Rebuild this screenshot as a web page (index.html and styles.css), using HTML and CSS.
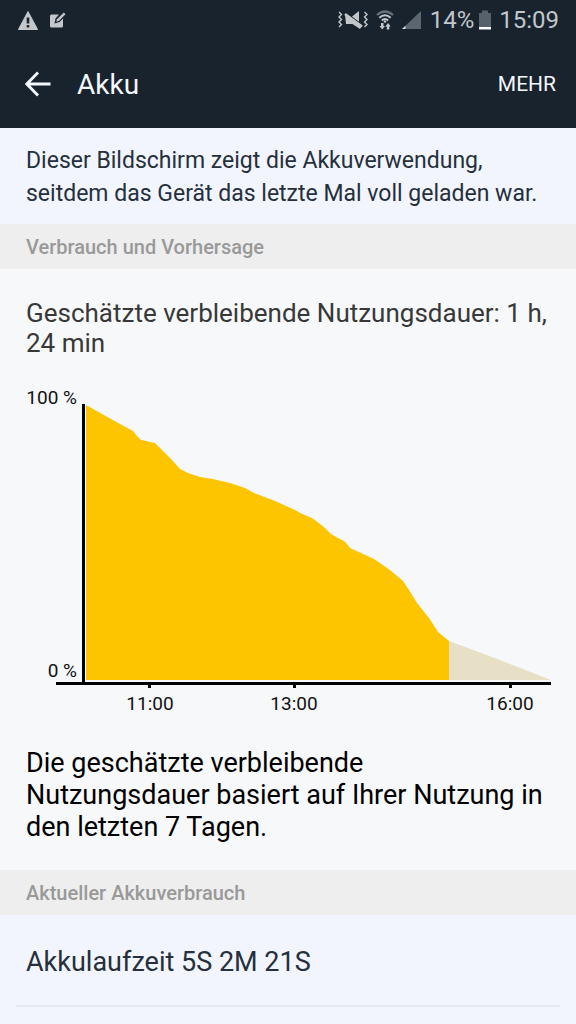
FILE: index.html
```html
<!DOCTYPE html>
<html lang="de">
<head>
  <meta charset="UTF-8">
  <title>Akku</title>
  <meta name="viewport" content="width=device-width, initial-scale=1.0">
  <link rel="stylesheet" href="styles.css">
</head>
<body>

  <div class="statusbar">
    <div class="status-group">
      <svg width="20" height="19" viewBox="0 0 20 19">
        <path d="M10 0.5L19.6 18.5H0.4Z" fill="#c3c6ca" stroke="#c3c6ca" stroke-linejoin="round"/>
        <path d="M8.7 6.5h2.6v6H8.7zM8.7 14h2.6v2.4H8.7z" fill="#18232e"/>
      </svg>
      <svg width="16" height="16" viewBox="0 0 16 16">
        <path d="M1.500 2.500H9L5.500 6.500L4.500 11.500L9.500 10L13 6.500V14q0 1.500-1.500 1.500h-10Q0 15.500 0 14V4q0-1.500 1.500-1.500z" fill="#c3c6ca"/>
        <path d="M13.800 0.500L15.500 2.200L8.800 9L6.300 9.700L7 7.200z" fill="#c3c6ca"/>
      </svg>
    </div>
    <div class="status-group status-right">
      <svg width="30" height="20" viewBox="0 0 30 20">
        <path d="M14 6.500L21 1v13z" fill="#c3c6ca"/>
        <path d="M7 4.500L23.500 16.500L22 19L14.500 14H8z" fill="#c3c6ca"/>
        <path d="M7 2.500L24.500 15" stroke="#18232e" stroke-width="1.500"/>
        <path d="M7 4L24 16.500" stroke="#c3c6ca" stroke-width="2.600"/>
        <path d="M1 2l2.500 2.500L1 7l2.500 2.500L1 12l2.500 2.500L1 17M26.500 2L29 4.500L26.500 7L29 9.500L26.500 12L29 14.500L26.500 17" fill="none" stroke="#c3c6ca" stroke-width="1.400"/>
      </svg>
      <svg width="18" height="20" viewBox="0 0 18 20">
        <path d="M1 5Q9-2 17 5" fill="none" stroke="#66717a" stroke-width="2.200"/>
        <path d="M3.300 7.800Q9 2.800 14.700 7.800M5.800 10.500Q9 7.500 12.200 10.500" fill="none" stroke="#c3c6ca" stroke-width="2"/>
        <circle cx="9" cy="11.500" r="1.300" fill="#c3c6ca"/>
        <path d="M5 13h2.500v3h1.500l-2.800 3.500L3.500 16H5zM10.800 19.500h2.500v-3h1.500L12 13l-2.700 3.500h1.500z" fill="#c3c6ca"/>
      </svg>
      <svg width="20" height="20" viewBox="0 0 20 20">
        <path d="M19 1v18H0z" fill="#5b6670"/>
        <path d="M3.500 15.700V19H0z" fill="#d5d8db"/>
      </svg>
      <div class="battery">
        <span>14%</span>
        <svg width="12" height="20" viewBox="0 0 12 20">
          <path d="M3 0.500h6V3h3v14H0V3h3z" fill="#56616b"/>
          <path d="M0 17h12v2.500H0z" fill="#fff"/>
        </svg>
      </div>
      <span>15:09</span>
    </div>
  </div>

  <header class="navbar">
    <button class="back-btn" aria-label="Zurück">
      <svg width="26" height="26" viewBox="0 0 26 26">
        <path d="M13 1.500L1.800 13L13 24.500M2 13H25.500" fill="none" stroke="#f4f7fb" stroke-width="2.900"/>
      </svg>
    </button>
    <h1>Akku</h1>
    <button class="more-btn">MEHR</button>
  </header>

  <main>
    <p class="intro">Dieser Bildschirm zeigt die Akkuverwendung, seitdem das Gerät das letzte Mal voll geladen war.</p>

    <h2 class="section-title">Verbrauch und Vorhersage</h2>
    <section class="forecast">
      <p class="remaining">Geschätzte verbleibende Nutzungsdauer: 1 h, 24 min</p>

      <svg class="chart" viewBox="0 0 525 330">
        <polygon class="used" points="60,20 76,29 94,39 107,46 111,51 115,55 120,56 129,58 134,63 146,75 154,84 162,88 174,92 187,94 204,98 219,103 228,108 249,116 269,125 274,128 286,133 294,139 299,143 305,149 310,152 318,156 321,159 324,163 348,174 364,185 377,196 383,205 391,218 403,233 412,247 423,256 423,295 60,295"/>
        <polygon class="predicted" points="423,256 474,275 525,295 423,295"/>
        <path class="axis" d="M57.500 19V298M30 298.500H525M123.500 298V303M268.500 298V303M484.500 298V303"/>
        <text x="51" y="19" text-anchor="end">100 %</text>
        <text x="51" y="292" text-anchor="end">0 %</text>
        <text x="124" y="325" text-anchor="middle">11:00</text>
        <text x="268" y="325" text-anchor="middle">13:00</text>
        <text x="484" y="325" text-anchor="middle">16:00</text>
      </svg>

      <p class="note">Die geschätzte verbleibende Nutzungsdauer basiert auf Ihrer Nutzung in den letzten 7 Tagen.</p>
    </section>

    <h2 class="section-title">Aktueller Akkuverbrauch</h2>
    <div class="usage-row">Akkulaufzeit 5S 2M 21S</div>
  </main>

</body>
</html>
```

FILE: styles.css
```css
body {
  margin: 0;
  font-family: Roboto, sans-serif;
  background: #f2f5fd;
  color: #25303c;
}

p, h1, h2 {
  margin: 0;
  font-weight: 400;
}

button {
  padding: 0;
  border: none;
  background: none;
  color: #f4f7fb;
  font-family: inherit;
  cursor: pointer;
}

svg {
  display: block;
}

.statusbar {
  height: 40px;
  padding: 0 17px 0 18px;
  display: flex;
  align-items: center;
  justify-content: space-between;
  background: #18232e;
  color: #c3c6ca;
  font-size: 24px;
}

.status-group {
  display: flex;
  align-items: center;
  gap: 12px;
}

.status-right {
  gap: 8px;
}

.battery {
  display: flex;
  align-items: center;
  gap: 5px;
}

.navbar {
  height: 88px;
  padding: 0 20px 0 25px;
  display: flex;
  align-items: center;
  background: #18232e;
  color: #f4f7fb;
}

.navbar h1 {
  flex: 1;
  margin-left: 26px;
  font-size: 28px;
}

.more-btn {
  font-size: 21px;
}

.intro {
  padding: 16px 26px 14px;
  font-size: 23px;
  line-height: 33px;
}

.section-title {
  padding: 2px 26px 0;
  background: #eee;
  color: #999;
  font-size: 20px;
  font-weight: 500;
  line-height: 43px;
}

.forecast {
  padding: 29px 25px 27px 26px;
  background: #f7f8fa;
}

.remaining {
  color: #383838;
  font-size: 26px;
  line-height: 30px;
}

.chart {
  width: 100%;
  margin: 27px 0 32px;
}

.chart text {
  font-size: 19px;
  fill: #111;
}

.used {
  fill: #fdc400;
}

.predicted {
  fill: #e7e0c6;
}

.axis {
  fill: none;
  stroke: #000;
  stroke-width: 3;
}

.note {
  color: #000;
  font-size: 27px;
  line-height: 32px;
}

.usage-row {
  margin: 0 16px;
  padding: 4px 10px 0;
  border-bottom: 2px solid #e6e8f0;
  font-size: 27px;
  line-height: 86px;
}
```
